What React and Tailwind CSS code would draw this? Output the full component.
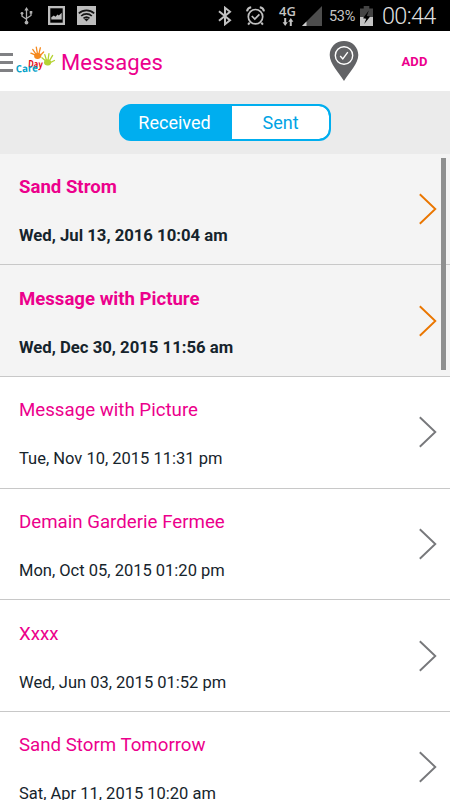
import { useState } from 'react';

const messages = [
  { id: 1, title: 'Sand Strom', date: 'Wed, Jul 13, 2016 10:04 am', unread: true },
  { id: 2, title: 'Message with Picture', date: 'Wed, Dec 30, 2015 11:56 am', unread: true },
  { id: 3, title: 'Message with Picture', date: 'Tue, Nov 10, 2015 11:31 pm', unread: false },
  { id: 4, title: 'Demain Garderie Fermee', date: 'Mon, Oct 05, 2015 01:20 pm', unread: false },
  { id: 5, title: 'Xxxx', date: 'Wed, Jun 03, 2015 01:52 pm', unread: false },
  { id: 6, title: 'Sand Storm Tomorrow', date: 'Sat, Apr 11, 2015 10:20 am', unread: false },
];

function StatusBar() {
  return (
    <div className="flex h-[31px] shrink-0 items-center bg-black text-[#c4c4c4]">
      {/* USB */}
      <svg className="ml-5 h-[18px] w-[13px]" viewBox="0 0 13 18" fill="none" stroke="#b0b0b0" strokeWidth="1.3">
        <path d="M6.5 3v12M2 7v2.2l4.5 3M11 6v2.5l-4.5 3" />
        <path d="M6.5 0L4.3 3.6h4.4z" fill="#b0b0b0" stroke="none" />
        <circle cx="6.5" cy="15.6" r="1.9" fill="#b0b0b0" stroke="none" />
        <circle cx="2" cy="6.3" r="1.4" fill="#b0b0b0" stroke="none" />
        <path d="M9.7 4h2.6v2.6H9.7z" fill="#b0b0b0" stroke="none" />
      </svg>
      {/* Screenshot saved */}
      <svg className="ml-[15px] h-[19px] w-[17px]" viewBox="0 0 17 19">
        <path d="M0 0h17v19H0z" fill="#bdbdbd" />
        <path d="M2.3 2.3h12.4v14.4H2.3z" fill="#000" />
        <path d="M3.3 13.6v-2.4l2.5-1.7 1.7 1.3 2-2.3 1.3 1 2.9-2.7v6.8z" fill="#bdbdbd" />
      </svg>
      <svg className="ml-3 h-[19px] w-[19px]" viewBox="0 0 19 19">
        <path d="M0 0h19v19H0z" fill="#bdbdbd" />
        <g fill="none" stroke="#151515" strokeWidth="1.7">
          <path d="M1.8 7.4c4.5-4.1 10.9-4.1 15.4 0" />
          <path d="M4.2 10c3-2.8 7.6-2.8 10.6 0" />
          <path d="M6.5 12.4c1.7-1.5 4.3-1.5 6 0" />
        </g>
        <path d="M7.2 13.1q2.3-1.4 4.6 0L9.5 15.6z" fill="#151515" />
      </svg>

      {/* Bluetooth */}
      <svg className="ml-[122px] h-5 w-[14px]" viewBox="0 0 14 20" fill="none" stroke="#c0c0c0" strokeWidth="2">
        <path d="M1 5.2l11 9-5 4V1.8l5 4-11 9" />
      </svg>
      {/* Alarm */}
      <svg className="ml-[14px] h-5 w-[19px]" viewBox="0 0 19 20" fill="none" stroke="#c0c0c0" strokeWidth="1.7">
        <circle cx="9.5" cy="10.7" r="7.2" />
        <path d="M5.8 10l3 3 4.6-4.6" />
        <path d="M1 5.3q.5-3.5 4.2-4M18 5.3q-.5-3.5-4.2-4M3.7 16.7l-1.6 2M15.3 16.7l1.6 2" strokeWidth="2" />
      </svg>
      <div className="ml-[14px] flex w-[17px] flex-col items-center">
        <span className="font-['Open_Sans',sans-serif] text-[13px] leading-[12px] font-semibold">4G</span>
        <svg className="mt-[1px] h-[8px] w-[12px]" viewBox="0 0 12 8" fill="#c4c4c4">
          <path d="M2.2 0h2v4.3h1.6L3.2 8 .6 4.3h1.6zM7.8 8h2V3.7h1.6L8.8 0 6.2 3.7h1.6z" />
        </svg>
      </div>
      {/* Signal strength */}
      <svg className="ml-[6px] h-5 w-5" viewBox="0 0 20 20">
        <path d="M20 0v20H0z" fill="#4d4d4d" />
        <path d="M4.5 15.5V20H0z" fill="#d0d0d0" />
      </svg>
      <span className="mt-[3px] ml-[7px] w-[27px] text-[14.5px] leading-none tracking-[-0.3px] whitespace-nowrap">53%</span>
      {/* Battery, charging */}
      <svg className="ml-1 h-5 w-[13px]" viewBox="0 0 13 20">
        <path d="M3.7 0h5.6v2.5H13V20H0V2.5h3.7z" fill="#444" />
        <path d="M0 11h13v9H0z" fill="#c4c4c4" />
        <path d="M8.8 4.5L3 12.2l3.2.6-2 5.2 6-7.4-3.300-.6z" fill="#000" />
      </svg>
      <span className="mt-[3px] ml-[9px] text-[23.5px] leading-none font-light tracking-[-0.7px] text-[#dedede]">00:44</span>
    </div>
  );
}

function Hand({ color, transform }) {
  return (
    <g transform={transform} fill={color} stroke={color} strokeLinecap="round">
      <ellipse cx="0" cy="2" rx="3.6" ry="3" stroke="none" />
      <path d="M-2 1L-6.5 -1.5M-1.6 0L-4.3 -5M0 0L-.5 -6.9M1.4 0L3.5 -5.9M2.2 2L6.3 -1.3" strokeWidth="1.3" fill="none" />
    </g>
  );
}

function Logo() {
  return (
    <svg className="ml-[3px] h-[32px] w-[40px]" viewBox="0 0 40 32">
      <Hand color="#f58a1f" transform="translate(21.5 9) rotate(-6)" />
      <Hand color="#b5d334" transform="translate(32 15.5) rotate(12)" />
      <text x="12" y="22" fill="#e30613" fontSize="10" fontWeight="700" fontFamily="'Open Sans', sans-serif" textLength="14.5" lengthAdjust="spacingAndGlyphs" transform="rotate(4 12 22)">Day</text>
      <text x="0" y="27.5" fill="#009fc7" fontSize="10" fontWeight="700" fontFamily="'Open Sans', sans-serif" textLength="22" lengthAdjust="spacingAndGlyphs" transform="rotate(-3 0 27)">Care</text>
    </svg>
  );
}

function Header() {
  return (
    <header className="flex h-[60px] shrink-0 items-center bg-white">
      <button type="button" aria-label="Menu" className="mt-[2px] flex w-[13px] flex-col gap-[5px]">
        <span className="h-[3px] bg-[#808184]" />
        <span className="h-[3px] bg-[#808184]" />
        <span className="h-[3px] bg-[#808184]" />
      </button>
      <Logo />
      <h1 className="mt-[4px] ml-[5px] text-[22px] leading-none tracking-[0.15px] text-[#ec008c]">Messages</h1>
      <svg className="ml-auto h-10 w-[30px]" viewBox="0 0 30 40">
        <path d="M15 0C6.8 0 .7 6.2.7 14c0 8.5 9 17.5 14.3 26C20.3 31.5 29.3 22.5 29.3 14 29.3 6.2 23.2 0 15 0z" fill="#626366" />
        <circle cx="15" cy="14.5" r="8.7" fill="none" stroke="#fff" strokeWidth="1.4" />
        <path d="M11.2 15l2.6 3 5-6.8" fill="none" stroke="#fff" strokeWidth="1.4" />
      </svg>
      <button type="button" className="mt-[1px] mr-[22px] ml-[42px] w-[27px] text-[13px] leading-none font-bold tracking-[0.2px]">
        <span className="text-[#ec008c]">ADD</span>
      </button>
    </header>
  );
}

function Tabs({ active, onChange }) {
  const base = 'flex items-center justify-center text-[18px]';
  return (
    <div className="flex h-[62.5px] shrink-0 items-start justify-center bg-[#ebebeb] pt-[13px]">
      <div className="flex h-[37px] w-[212px] overflow-hidden rounded-[12px] border-2 border-[#00aeef] bg-[#00aeef]">
        <button
          type="button"
          onClick={() => onChange('received')}
          className={`${base} w-[111px] pr-[4px] ${active === 'received' ? 'bg-[#00aeef] text-white' : 'rounded-l-[10px] bg-white text-[#00a3e4]'}`}
        >
          Received
        </button>
        <button
          type="button"
          onClick={() => onChange('sent')}
          className={`${base} w-[97px] ${active === 'sent' ? 'bg-[#00aeef] text-white' : 'rounded-r-[10px] bg-white text-[#00a3e4]'}`}
        >
          Sent
        </button>
      </div>
    </div>
  );
}

function MessageRow({ message }) {
  const { title, date, unread } = message;
  return (
    <li
      className={`flex h-[111.7px] shrink-0 items-center justify-between border-b border-[#c8c8c8] pr-[13px] pl-[19px] ${
        unread ? 'bg-[#f4f4f4] font-bold' : 'bg-white'
      }`}
    >
      <div className="flex flex-col gap-[27px] pt-[3px]">
        <span className={`leading-[24px] text-[#ec008c] ${unread ? 'text-[18.6px]' : 'text-[18.7px]'}`}>{title}</span>
        <span className={`leading-[20px] text-[#16242c] ${unread ? 'text-[16.7px]' : 'text-[16.5px]'}`}>{date}</span>
      </div>
      <svg className="h-8 w-[18px]" viewBox="0 0 18 32" fill="none" stroke={unread ? '#ea7600' : '#77787b'} strokeWidth="1.9">
        <path d="M.8 1.2L16.3 16 .8 30.8" />
      </svg>
    </li>
  );
}

export default function App() {
  const [tab, setTab] = useState('received');

  return (
    <div className="flex h-[800px] w-[450px] flex-col overflow-hidden bg-white font-[Roboto,sans-serif]">
      <StatusBar />
      <Header />
      <Tabs active={tab} onChange={setTab} />
      <main className="relative flex-1 overflow-hidden">
        <ul className="flex flex-col">
          {messages.map((message) => (
            <MessageRow key={message.id} message={message} />
          ))}
        </ul>
        {/* Scroll thumb */}
        <div className="absolute top-[4px] right-[4px] h-[212px] w-[5px] bg-[#8f9090]" />
      </main>
    </div>
  );
}
